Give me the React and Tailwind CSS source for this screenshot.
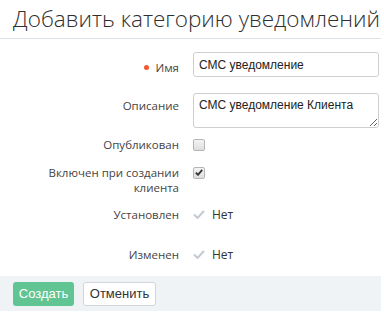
import { useState } from 'react';

const labelFont = { fontFamily: '"Open Sans", "Noto Sans", sans-serif' };
const arial = { fontFamily: '"Liberation Sans", Arial, sans-serif' };

const Check = () => (
  <svg width="12" height="9" viewBox="0 0 12 9" className="shrink-0">
    <path d="M1 4.5 L4.5 8 L11 1" fill="none" stroke="#c4cad1" strokeWidth="2" />
  </svg>
);

const Box = ({ checked, onClick }) => (
  <span
    onClick={onClick}
    className="flex h-[12px] w-[12px] items-center justify-center rounded-[2px] border border-[#b5b5b5] bg-gradient-to-b from-[#f4f4f4] to-[#dedede]"
  >
    {checked && (
      <svg width="8" height="7" viewBox="0 0 8 7">
        <path d="M0.8 3.6 L3 5.8 L7.2 0.8" fill="none" stroke="#333" strokeWidth="1.8" />
      </svg>
    )}
  </span>
);

export default function App() {
  const [name, setName] = useState('СМС уведомление');
  const [desc, setDesc] = useState('СМС уведомление Клиента');
  const [published, setPublished] = useState(false);
  const [enabled, setEnabled] = useState(true);

  return (
    <div className="w-[381px] bg-white text-[#333]">
      <div className="h-[39px] border-b border-[#dde2e7] pl-[13px]">
        <h1 className="whitespace-nowrap pt-[2px] text-[22.5px] font-light leading-[34px] text-[#2f2f2f]" style={labelFont}>
          Добавить категорию уведомлений
        </h1>
      </div>

      <div className="grid grid-cols-[179px_1fr] gap-x-[14px] pr-[2px] pt-[13px] text-[11.5px] leading-[15px]" style={labelFont}>
        <div className="flex items-center justify-end gap-[6px] pt-[5px] text-[#444]">
          <span className="h-[5px] w-[5px] rounded-full bg-[#f0582d]" />
          Имя
        </div>
        <input
          value={name}
          onChange={(e) => setName(e.target.value)}
          className="h-[25px] rounded-[3px] border border-[#cfcfcf] px-[5px] text-[12px] text-[#222] outline-none"
          style={arial}
        />

        <div className="mt-[16px] pt-[5px] text-right text-[#444]">Описание</div>
        <textarea
          value={desc}
          onChange={(e) => setDesc(e.target.value)}
          className="mt-[16px] h-[35px] rounded-[3px] border border-[#cfcfcf] px-[5px] py-[4px] text-[12px] leading-[15px] text-[#222] outline-none"
          style={arial}
        />

        <div className="mt-[9px] text-right text-[#444]">Опубликован</div>
        <div className="mt-[9px] flex h-[15px] items-center">
          <Box checked={published} onClick={() => setPublished(!published)} />
        </div>

        <div className="mt-[13px] text-right text-[#444]">
          Включен при создании
          <br />
          клиента
        </div>
        <div className="mt-[13px] flex h-[15px] items-center">
          <Box checked={enabled} onClick={() => setEnabled(!enabled)} />
        </div>

        <div className="mt-[12px] text-right text-[#444]">Установлен</div>
        <div className="mt-[12px] flex items-center gap-[7px] text-[12px] text-[#333]">
          <Check />
          Нет
        </div>

        <div className="mt-[25px] text-right text-[#444]">Изменен</div>
        <div className="mt-[25px] flex items-center gap-[7px] text-[12px] text-[#333]">
          <Check />
          Нет
        </div>
      </div>

      <div className="mt-[14px] flex h-[35px] items-start gap-[9px] bg-[#f0f3f6] pl-[13px] pt-[6px]" style={arial}>
        <button className="h-[24px] w-[61px] rounded-[3px] bg-[#60c593] text-[13px] text-white">Создать</button>
        <button className="h-[24px] w-[73px] rounded-[3px] border border-[#d3d6d9] bg-white text-[13px] text-[#333]">
          Отменить
        </button>
      </div>
    </div>
  );
}
